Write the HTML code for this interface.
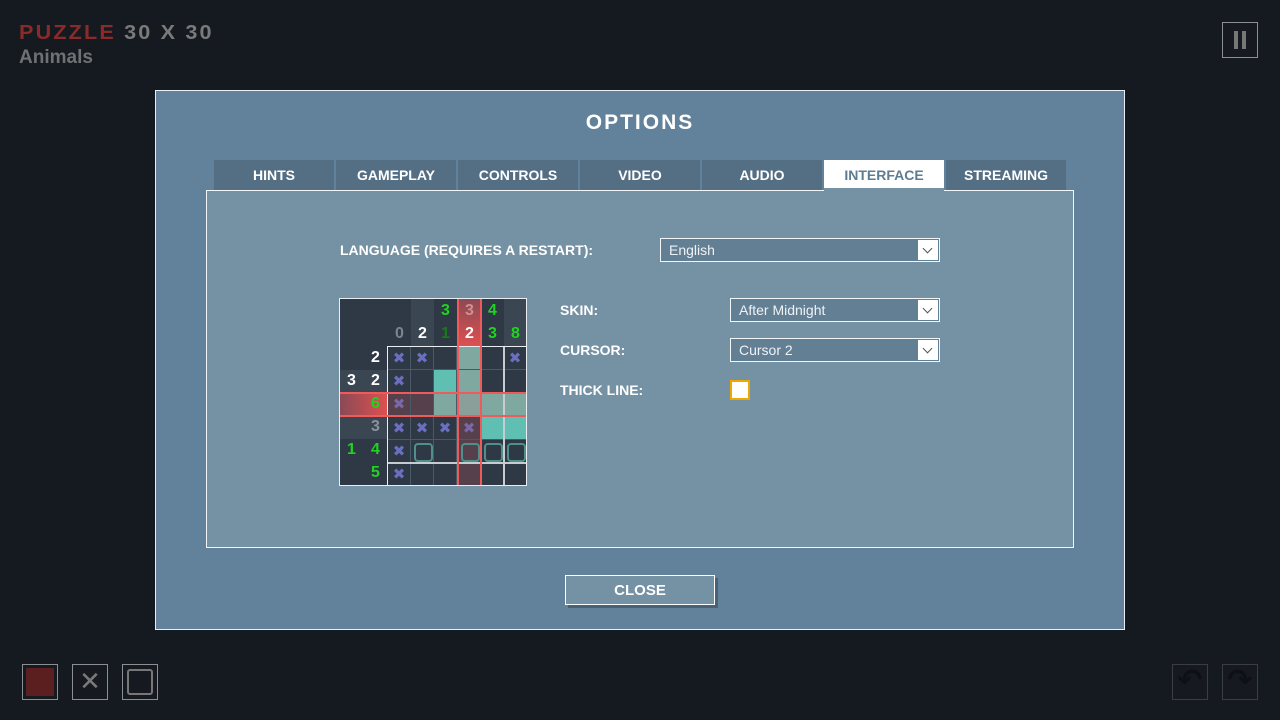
<!DOCTYPE html>
<html><head><meta charset="utf-8"><style>
*{margin:0;padding:0;box-sizing:border-box}
body{width:1280px;height:720px;background:#151a20;position:relative;overflow:hidden;font-family:"Liberation Sans",sans-serif}
.a{position:absolute}
.title{left:19px;top:23px;font:bold 20px "Liberation Sans",sans-serif;letter-spacing:2px;line-height:20px;transform:scaleX(1.08);transform-origin:left}
.dlg{left:155px;top:90px;width:970px;height:540px;background:#62819a;border:1px solid #e8eef2}
.tab{top:160px;height:30px;width:120px;background:#546f84;color:#fff;font-weight:bold;font-size:14px;text-align:center;line-height:30px}
.panel{left:206px;top:190px;width:868px;height:358px;background:#7592a5;border:1px solid #f2f5f7}
.lbl{color:#fff;font-weight:bold;font-size:14px}
.dd{height:24px;background:#637f94;border:1px solid #f2f5f7;color:#eef2f5;font-size:14px;line-height:22px;padding-left:8px}
.dd i{position:absolute;right:1px;top:1px;width:20px;height:20px;background:#fff}
.dd i:after{content:"";position:absolute;left:6px;top:5px;width:6px;height:6px;border-right:1.5px solid #555;border-bottom:1.5px solid #555;transform:rotate(45deg)}
.pz{left:339px;top:298px;width:188px;height:188px;background:#2e3945;border:1px solid #e8eef2;overflow:hidden}
.c{position:absolute;width:23px;height:23px;border-right:1px solid #4b5866;border-bottom:1px solid #4b5866;text-align:center;line-height:22px;font-size:15px;color:#6a6fc0;font-family:"DejaVu Sans",sans-serif;font-weight:bold}
.n{position:absolute;font-weight:bold;font-size:16px;width:23px;text-align:center}
.g{color:#1ed41e}.w{color:#fff}
.o:after{content:"";position:absolute;left:3px;top:3px;width:15px;height:15px;border:2px solid #4f8f8c;border-radius:4px}
.btn{border:1px solid #8a8f94;background:#161a20}
</style></head><body>
<div class="a title"><span style="color:#8b2a28">PUZZLE</span> <span style="color:#7a7a7a">30 X 30</span></div>
<div class="a" style="left:19px;top:47px;color:#6f7275;font-weight:bold;font-size:19px">Animals</div>
<div class="a btn" style="left:1222px;top:22px;width:36px;height:36px"><div class="a" style="left:11px;top:8px;width:4px;height:18px;background:#777"></div><div class="a" style="left:19px;top:8px;width:4px;height:18px;background:#777"></div></div>
<div class="a btn" style="left:22px;top:664px;width:36px;height:36px"><div class="a" style="left:3px;top:3px;width:28px;height:28px;background:#5c1f1f"></div></div>
<div class="a btn" style="left:72px;top:664px;width:36px;height:36px;color:#7a7a7a;font:bold 26px 'DejaVu Sans';text-align:center;line-height:34px">✕</div>
<div class="a btn" style="left:122px;top:664px;width:36px;height:36px"><div class="a" style="left:4px;top:4px;width:26px;height:26px;border:2px solid #777;border-radius:3px"></div></div>
<div class="a btn" style="left:1172px;top:664px;width:36px;height:36px;border-color:#3a3e44;color:#0d1014;font:bold 30px 'DejaVu Sans';text-align:center;line-height:32px">↶</div>
<div class="a btn" style="left:1222px;top:664px;width:36px;height:36px;border-color:#3a3e44;color:#0d1014;font:bold 30px 'DejaVu Sans';text-align:center;line-height:32px">↷</div>

<div class="a dlg"></div>
<div class="a" style="left:555px;top:111px;width:170px;text-align:center;color:#fff;font:bold 21px 'Liberation Sans',sans-serif;letter-spacing:2px">OPTIONS</div>
<div class="a tab" style="left:214px">HINTS</div>
<div class="a tab" style="left:336px">GAMEPLAY</div>
<div class="a tab" style="left:458px">CONTROLS</div>
<div class="a tab" style="left:580px">VIDEO</div>
<div class="a tab" style="left:702px">AUDIO</div>
<div class="a tab" style="left:824px;background:#fff;color:#5e7d92;height:31px">INTERFACE</div>
<div class="a tab" style="left:946px">STREAMING</div>
<div class="a panel"></div>
<div class="a tab" style="left:824px;top:188px;background:#7592a5;height:3px"></div>

<div class="a lbl" style="left:340px;top:242px">LANGUAGE (REQUIRES A RESTART):</div>
<div class="a dd" style="left:660px;top:238px;width:280px">English<i></i></div>
<div class="a lbl" style="left:560px;top:302px">SKIN:</div>
<div class="a dd" style="left:730px;top:298px;width:210px">After Midnight<i></i></div>
<div class="a lbl" style="left:560px;top:342px">CURSOR:</div>
<div class="a dd" style="left:730px;top:338px;width:210px">Cursor 2<i></i></div>
<div class="a lbl" style="left:560px;top:382px">THICK LINE:</div>
<div class="a" style="left:730px;top:380px;width:20px;height:20px;background:#fff;border:2px solid #f0a800"></div>

<div class="a pz">
 <div class="a" style="left:71px;top:0;width:23px;height:48px;background:#3a4652"></div>
 <div class="a" style="left:164px;top:0;width:24px;height:48px;background:#3a4652"></div>
 <div class="a" style="left:0;top:71px;width:48px;height:23px;background:#3a4652"></div>
 <div class="a" style="left:0;top:117px;width:48px;height:23px;background:#3a4652"></div>
 <div class="a" style="left:118px;top:0;width:23px;height:48px;background:linear-gradient(#8a4a55,#e05050)"></div>
 <div class="a" style="left:0;top:94px;width:48px;height:23px;background:linear-gradient(90deg,#8a4a55,#e05050)"></div>
 <div class="n" style="left:48px;top:26px;color:#7b8590">0</div>
 <div class="n w" style="left:71px;top:26px">2</div>
 <div class="n g" style="left:94px;top:3px">3</div><div class="n" style="left:94px;top:26px;color:#1a7a1a">1</div>
 <div class="n" style="left:118px;top:3px;color:#d09090">3</div><div class="n w" style="left:118px;top:26px">2</div>
 <div class="n g" style="left:141px;top:3px">4</div><div class="n g" style="left:141px;top:26px">3</div>
 <div class="n g" style="left:164px;top:26px">8</div>
 <div class="n w" style="left:24px;top:50px">2</div>
 <div class="n w" style="left:0;top:73px">3</div><div class="n w" style="left:24px;top:73px">2</div>
 <div class="n g" style="left:24px;top:96px">6</div>
 <div class="n" style="left:24px;top:119px;color:#8a939c">3</div>
 <div class="n g" style="left:0;top:142px">1</div><div class="n g" style="left:24px;top:142px">4</div>
 <div class="n g" style="left:24px;top:165px">5</div>
 <div class="a" style="left:47px;top:47px;width:141px;height:141px;border-left:1px solid #e8eef2;border-top:1px solid #e8eef2"></div>
 <div class="c" style="left:48px;top:48px">✖</div><div class="c" style="left:71px;top:48px">✖</div><div class="c" style="left:94px;top:48px"></div><div class="c" style="left:118px;top:48px;background:#7fa8a0"></div><div class="c" style="left:141px;top:48px"></div><div class="c" style="left:164px;top:48px">✖</div>
 <div class="c" style="left:48px;top:71px">✖</div><div class="c" style="left:71px;top:71px"></div><div class="c" style="left:94px;top:71px;background:#5fbfb2"></div><div class="c" style="left:118px;top:71px;background:#7fa8a0"></div><div class="c" style="left:141px;top:71px"></div><div class="c" style="left:164px;top:71px"></div>
 <div class="c" style="left:48px;top:94px;background:#55404c;color:#7a68a8">✖</div><div class="c" style="left:71px;top:94px;background:#55404c"></div><div class="c" style="left:94px;top:94px;background:#7fa8a0"></div><div class="c" style="left:118px;top:94px;background:#8a9f9a"></div><div class="c" style="left:141px;top:94px;background:#7fa8a0"></div><div class="c" style="left:164px;top:94px;background:#7fa8a0"></div>
 <div class="c" style="left:48px;top:118px">✖</div><div class="c" style="left:71px;top:118px">✖</div><div class="c" style="left:94px;top:118px">✖</div><div class="c" style="left:118px;top:118px;background:#55404c;color:#7a68a8">✖</div><div class="c" style="left:141px;top:118px;background:#5fbfb2"></div><div class="c" style="left:164px;top:118px;background:#5fbfb2"></div>
 <div class="c" style="left:48px;top:141px">✖</div><div class="c o" style="left:71px;top:141px"></div><div class="c" style="left:94px;top:141px"></div><div class="c o" style="left:118px;top:141px;background:#55404c"></div><div class="c o" style="left:141px;top:141px"></div><div class="c o" style="left:164px;top:141px"></div>
 <div class="c" style="left:48px;top:164px">✖</div><div class="c" style="left:71px;top:164px"></div><div class="c" style="left:94px;top:164px"></div><div class="c" style="left:118px;top:164px;background:#55404c"></div><div class="c" style="left:141px;top:164px"></div><div class="c" style="left:164px;top:164px"></div>
 <div class="a" style="left:48px;top:163px;width:140px;height:2px;background:#c8ccd0"></div>
 <div class="a" style="left:163px;top:48px;width:2px;height:140px;background:#c8ccd0"></div>
 <div class="a" style="left:0;top:93px;width:188px;height:2px;background:#ef5a5a"></div>
 <div class="a" style="left:0;top:116px;width:188px;height:2px;background:#ef5a5a"></div>
 <div class="a" style="left:117px;top:0;width:2px;height:188px;background:#ef5a5a"></div>
 <div class="a" style="left:140px;top:0;width:2px;height:188px;background:#ef5a5a"></div>
</div>

<div class="a" style="left:568px;top:578px;width:150px;height:30px;background:#4a6275"></div>
<div class="a" style="left:565px;top:575px;width:150px;height:30px;background:#7592a5;border:1px solid #fff;color:#fff;font-weight:bold;font-size:15px;text-align:center;line-height:29px">CLOSE</div>
</body></html>
